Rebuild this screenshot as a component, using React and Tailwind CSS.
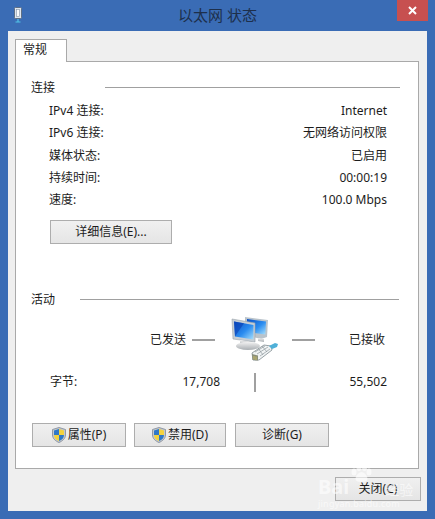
import React from "react";

const rows = [
  ["IPv4 连接:", "Internet"],
  ["IPv6 连接:", "无网络访问权限"],
  ["媒体状态:", "已启用"],
  ["持续时间:", "00:00:19"],
  ["速度:", "100.0 Mbps"],
];

const btn =
  "h-6 border border-[#adadad] bg-gradient-to-b from-[#f0f0f0] to-[#e5e5e5] flex items-center justify-center text-[12px] text-[#1c1c1c]";

const Shield = () => (
  <svg width="14" height="16" viewBox="0 0 14 16" className="mr-[2px] shrink-0">
    <path d="M7 .5 13.500 2.500V8c0 3.600-3 6-6.500 7.500C3.500 14 .5 11.600.5 8V2.500Z" fill="#c4c9cf" stroke="#7d8794" strokeWidth=".8" />
    <path d="M7 2 7 8H2V3.500Z" fill="#2f78c8" />
    <path d="M7 2 12 3.500V8H7Z" fill="#f3d23e" />
    <path d="M2 8H7V14C4 12.800 2 11 2 8Z" fill="#f3d23e" />
    <path d="M7 8H12C12 11 10 12.800 7 14Z" fill="#2f78c8" />
  </svg>
);

const NetIcon = () => (
  <svg width="48" height="46" viewBox="0 0 48 46">
    <defs>
      <linearGradient id="scr" x1="0" y1="0" x2="1" y2="1">
        <stop offset="0" stopColor="#0b4fc4" />
        <stop offset=".55" stopColor="#2a8cf0" />
        <stop offset="1" stopColor="#a9e0fb" />
      </linearGradient>
      <linearGradient id="stand" x1="0" y1="0" x2="0" y2="1">
        <stop offset="0" stopColor="#f2f2f2" />
        <stop offset="1" stopColor="#a9aeb2" />
      </linearGradient>
    </defs>
    {/* back monitor */}
    <path d="M14 0 37 3 36 20 30 22 14 18Z" fill="#b9c3cb" />
    <path d="M16 2 35 4.500 34.300 17.500 16 15Z" fill="url(#scr)" />
    <path d="M27 21 33 22 33 25 27 24Z" fill="url(#stand)" />
    {/* front monitor */}
    <path d="M1 2 24 6 24 25 2 22Z" fill="#c6ced5" stroke="#9aa3aa" strokeWidth=".6" />
    <path d="M3 4.500 22.500 8 22.300 22.500 4 19.500Z" fill="url(#scr)" />
    <path d="M3 4.500 13 6.300 5 18 4 19.500Z" fill="#0a3fb4" opacity=".6" />
    <path d="M9 23 18 24.500 19 28 9 27Z" fill="url(#stand)" />
    <ellipse cx="17" cy="29" rx="12" ry="4" fill="url(#stand)" />
    {/* plug */}
    <path d="M21 36 33 28 40 29 41 33 28 43 22 43Z" fill="#f0f3f4" stroke="#7f8a8f" strokeWidth=".8" />
    <path d="M24 35 34 29M26 37 37 30M29 39 39 32M27 31 32 38M31 29 36 35" stroke="#8f999e" strokeWidth=".7" fill="none" />
    <path d="M21 37 27 38.500 27 43.500 21.500 43Z" fill="#8a8f7c" />
    <path d="M23 39V42.500M25 39.500V43" stroke="#d8c860" strokeWidth=".8" />
    <path d="M38 29 44 26 47 27 46 30 41 32Z" fill="#4fb0d8" />
  </svg>
);

const Section = ({ title, lineClass }) => (
  <div className="flex items-center text-[12px] text-[#1c1c1c] h-5">
    <span className={lineClass}>{title}</span>
    <div className="flex-1 h-px bg-[#a0a0a0] -translate-y-px" />
  </div>
);

export default function App() {
  return (
    <div
      className="relative w-[435px] h-[519px] overflow-hidden bg-[#3a6cb5] flex flex-col"
      style={{ fontFamily: '"Noto Sans", "Noto Sans CJK SC", sans-serif' }}
    >
      {/* title bar */}
      <div className="relative h-[31px] shrink-0 flex items-center justify-center">
        <svg width="10" height="16" viewBox="0 0 10 16" className="absolute left-[13px] top-[7px]">
          <rect x="1.500" y=".5" width="7" height="11" rx="1" fill="#dfe6ee" stroke="#5e6f85" />
          <rect x="3.500" y="2.500" width="3" height="7" fill="#f8fafc" stroke="#8595a8" strokeWidth=".6" />
          <path d="M5 12V15M2.500 15H7.500" stroke="#52c4e8" strokeWidth="1.200" fill="none" />
        </svg>
        <span className="text-[15px] leading-5 text-[#1d2f4b] mt-[-2px]">以太网 状态</span>
        <div className="absolute right-[7px] top-0 w-[31px] h-[21px] bg-[#c75050] flex items-center justify-center">
          <svg width="9" height="9" viewBox="0 0 9 9">
            <path d="M1 1 8 8M8 1 1 8" stroke="#fff" strokeWidth="2" />
          </svg>
        </div>
      </div>

      {/* dialog body */}
      <div className="mx-2 h-[480px] bg-[#efefef] px-[7px] pt-2">
        <div className="relative z-10 w-[52px] h-[23px] bg-white border border-b-0 border-[#a9a9a9] flex items-start pl-[7px] pt-[2px] text-[12px] leading-4 text-[#1c1c1c]">
          常规
        </div>
        <div className="w-[404px] h-[408px] -mt-px bg-white border border-[#a9a9a9] pt-[16px] pl-[15px] pr-[18px]">
          <Section title="连接" lineClass="w-[74px]" />

          <div className="mt-[2px] pl-[18px] pr-[13px] text-[12px] text-[#1c1c1c]">
            {rows.map(([label, value]) => (
              <div key={label} className="h-[22.3px] flex items-center justify-between">
                <span>{label}</span>
                <span>{value}</span>
              </div>
            ))}
          </div>

          <div className={btn + " w-[122px] ml-[19px] mt-[9px]"}>详细信息(E)...</div>

          <div className="mt-[46px] mr-px">
            <Section title="活动" lineClass="w-[49px]" />
          </div>

          {/* activity */}
          <div className="mt-[7px] flex items-center h-[46px] text-[12px] text-[#1c1c1c]">
            <span className="w-[155px] text-right">已发送</span>
            <div className="w-[23px] h-0.5 bg-[#a0a0a0] ml-[6px]" />
            <div className="ml-[16px] mr-[13px]">
              <NetIcon />
            </div>
            <div className="w-[23px] h-0.5 bg-[#a0a0a0]" />
            <span className="ml-[34px]">已接收</span>
          </div>
          <div className="mt-[9px] flex items-center h-[20px] text-[12px] text-[#1c1c1c]">
            <span className="ml-[19px] w-[60px]">字节:</span>
            <span className="w-[110px] text-right">17,708</span>
            <div className="ml-[34px] w-0.5 h-[19px] bg-[#a0a0a0]" />
            <span className="w-[131px] text-right">55,502</span>
          </div>

          {/* action buttons */}
          <div className="mt-[31px] flex">
            <div className={btn + " w-[94px] ml-px"}>
              <Shield />
              属性(P)
            </div>
            <div className={btn + " w-[92px] ml-2"}>
              <Shield />
              禁用(D)
            </div>
            <div className={btn + " w-[94px] ml-[9px]"}>诊断(G)</div>
          </div>
        </div>
        <div className="flex justify-end mt-[8px]">
          <div className={btn + " w-[86px] mr-[-1px]"}>关闭(C)</div>
        </div>
      </div>

      {/* watermark over the corner */}
      <div className="absolute left-[318px] top-[464px] w-[100px] text-white/60 leading-none pointer-events-none">
        <svg width="22" height="18" viewBox="0 0 22 18" className="ml-[32px] block" fill="currentColor">
          <ellipse cx="4" cy="8" rx="2.500" ry="3.500" />
          <ellipse cx="9" cy="3.500" rx="2.500" ry="3.500" />
          <ellipse cx="14.500" cy="3.500" rx="2.500" ry="3.500" />
          <ellipse cx="19" cy="8" rx="2.500" ry="3.500" />
          <path d="M11.500 8c3 0 6 4 6 7 0 2-2 3-6 3s-6-1-6-3c0-3 3-7 6-7Z" />
        </svg>
        <div className="flex items-end -mt-[5px]">
          <span className="text-[20px] font-bold">Bai</span>
          <span className="text-[14px] ml-[36px]">经验</span>
        </div>
        <div className="text-[9px] mt-[2px] tracking-wide">jingyan.baidu.com</div>
      </div>
    </div>
  );
}
